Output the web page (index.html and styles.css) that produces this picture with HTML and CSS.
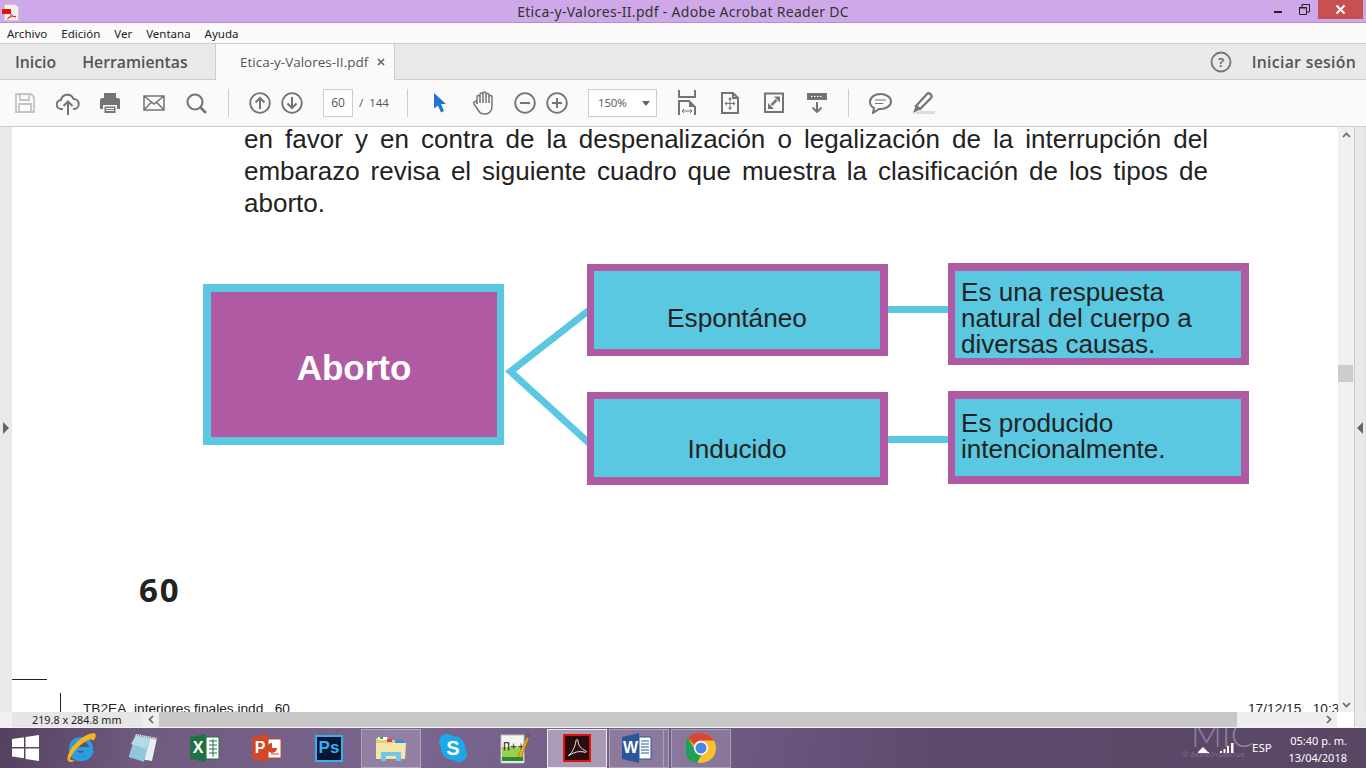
FILE: index.html
```html
<!DOCTYPE html>
<html lang="es">
<head>
<meta charset="utf-8">
<title>Etica-y-Valores-II.pdf - Adobe Acrobat Reader DC</title>
<link rel="stylesheet" href="styles.css">
</head>
<body>
<div class="app">

  <!-- window title -->
  <header class="titlebar">
    <svg class="app-icon" width="18" height="18" viewBox="0 0 18 18">
      <path d="M3.500 1.500h11l3 3v13h-14z" fill="#f4f0ee" stroke="#cfc8c8"/>
      <rect x="1" y="6" width="9" height="5" fill="#e5120c"/>
      <path d="M6 16c2-1 4-3 4.500-5M10 11c1 2 3 3 5 3M7 15c2-1 5-2 8-1.500" fill="none" stroke="#d8322c"/>
    </svg>
    <span class="title-text">Etica-y-Valores-II.pdf - Adobe Acrobat Reader DC</span>
    <div class="win-btns">
      <span class="win-min"></span>
      <svg class="win-restore" width="11" height="11" viewBox="0 0 11 11"><path d="M0.500 3.500h7v7h-7zM3 3V0.500h7.500V8H8" fill="none" stroke="#222" stroke-width="1"/><path d="M0 3h8v1.500H0z" fill="#222"/></svg>
      <span class="win-close">
        <svg width="11" height="11" viewBox="0 0 11 11"><path d="M1.500 1.500l8 8M9.500 1.500l-8 8" stroke="#fff" stroke-width="2"/></svg>
      </span>
    </div>
  </header>

  <nav class="menubar">
    <span>Archivo</span><span>Edición</span><span>Ver</span><span>Ventana</span><span>Ayuda</span>
  </nav>

  <div class="tabbar">
    <span class="tab-link tab-first">Inicio</span>
    <span class="tab-link">Herramientas</span>
    <div class="doc-tab">
      <span>Etica-y-Valores-II.pdf</span>
      <svg width="8" height="8" viewBox="0 0 8 8"><path d="M1 1l6 6M7 1L1 7" stroke="#666" stroke-width="1.700"/></svg>
    </div>
    <svg class="help-icon" width="22" height="22" viewBox="0 0 22 22">
      <circle cx="11" cy="11" r="9.500" fill="none" stroke="#747474" stroke-width="1.800"/>
      <text x="11" y="15.500" text-anchor="middle" class="help-mark">?</text>
    </svg>
    <span class="tab-link signin">Iniciar sesión</span>
  </div>

  <div class="toolbar">
    <svg class="tool t-save" width="20" height="20" viewBox="0 0 20 20"><path d="M1 1h15l3 3v15H1zM5 1v6h9V1M4 19v-8h12v8" fill="none" stroke="#c4c4c4" stroke-width="1.800"/></svg>
    <svg class="tool t-cloud" width="24" height="24" viewBox="0 0 24 24"><path d="M7 17H5.500a4.500 4.500 0 0 1-.5-9 6.500 6.500 0 0 1 12.500-1 5 5 0 0 1 .5 10H17" fill="none" stroke="#747474" stroke-width="2"/><path d="M12 23V10M7.500 14l4.500-4.500 4.500 4.500" fill="none" stroke="#747474" stroke-width="2"/></svg>
    <svg class="tool t-print" width="22" height="22" viewBox="0 0 22 22"><path d="M5 6V1h12v5zM3 6h16a2 2 0 0 1 2 2v9h-3v-4H4v4H1V8a2 2 0 0 1 2-2zM5.500 14.500h11V21h-11z" fill="#747474"/><path d="M7 16.500h8M7 18.500h8" stroke="#fff"/></svg>
    <svg class="tool t-mail" width="22" height="16" viewBox="0 0 22 16"><path d="M1 1h20v14H1zM1 1l10 8 10-8M1 15l7.500-8M21 15l-7.500-8" fill="none" stroke="#747474" stroke-width="1.500"/></svg>
    <svg class="tool t-search" width="21" height="21" viewBox="0 0 21 21"><circle cx="9" cy="9" r="7.500" fill="none" stroke="#747474" stroke-width="2"/><path d="M14.500 14.500l5.500 5.500" stroke="#747474" stroke-width="2.500"/></svg>
    <span class="sep sep-a"></span>
    <svg class="tool t-up" width="22" height="22" viewBox="0 0 22 22"><circle cx="11" cy="11" r="9.800" fill="none" stroke="#747474" stroke-width="1.800"/><path d="M11 17V6M6.500 10.500L11 6l4.500 4.500" fill="none" stroke="#747474" stroke-width="2"/></svg>
    <svg class="tool t-down" width="22" height="22" viewBox="0 0 22 22"><circle cx="11" cy="11" r="9.800" fill="none" stroke="#747474" stroke-width="1.800"/><path d="M11 5v11M6.500 11.500L11 16l4.500-4.500" fill="none" stroke="#747474" stroke-width="2"/></svg>
    <span class="page-input">60</span>
    <span class="page-total">/&nbsp; 144</span>
    <span class="sep sep-b"></span>
    <svg class="tool t-arrow" width="14" height="21" viewBox="0 0 14 21"><path d="M1 1l12 11H8l3 7-3 1.500-3-7-4 3z" fill="#1f74cf"/></svg>
    <svg class="tool t-hand" width="24" height="24" viewBox="0 0 24 24"><path d="M6 13V6a1.500 1.500 0 0 1 3 0V3.500a1.500 1.500 0 0 1 3 0v-1a1.500 1.500 0 0 1 3 0V4a1.500 1.500 0 0 1 3 0v2a1.500 1.500 0 0 1 3 0v9c0 5-3 8-7 8s-5-1-7-4l-4-6a1.500 1.500 0 0 1 2.500-2zM9 6v6M12 3v9M15 3v9M18 5v7" fill="none" stroke="#747474" stroke-width="1.500"/></svg>
    <svg class="tool t-minus" width="22" height="22" viewBox="0 0 22 22"><circle cx="11" cy="11" r="9.800" fill="none" stroke="#747474" stroke-width="1.800"/><path d="M6 11h10" stroke="#747474" stroke-width="2"/></svg>
    <svg class="tool t-plus" width="22" height="22" viewBox="0 0 22 22"><circle cx="11" cy="11" r="9.800" fill="none" stroke="#747474" stroke-width="1.800"/><path d="M6 11h10M11 6v10" stroke="#747474" stroke-width="2"/></svg>
    <div class="zoom-box"><span>150%</span><i class="caret"></i></div>
    <svg class="tool t-fitw" width="18" height="25" viewBox="0 0 18 25"><path d="M1 0v7h16V0" fill="none" stroke="#747474" stroke-width="2"/><path d="M1 25V11h10l6 6v8" fill="none" stroke="#747474" stroke-width="2"/><path d="M11 11v6h6z" fill="#747474"/><path d="M4 21h10M6 19l-2 2 2 2M12 19l2 2-2 2" fill="none" stroke="#747474"/></svg>
    <svg class="tool t-fitp" width="18" height="22" viewBox="0 0 18 22"><path d="M1 1h11l5 5v15H1zM12 1v5h5" fill="none" stroke="#747474" stroke-width="2"/><path d="M9 7v9M5 11.500h8" stroke="#747474"/><path d="M9 5l2 2.500H7zM9 18l2-2.500H7zM3.500 11.500L6 9.500v4zM14.500 11.500L12 9.500v4z" fill="#747474"/></svg>
    <svg class="tool t-full" width="20" height="21" viewBox="0 0 20 21"><path d="M1 1.500h18v18.500H1z" fill="none" stroke="#747474" stroke-width="2"/><path d="M10 4.500h6v6zM10 17H4v-6z" fill="#747474"/><path d="M12.500 8l-5 5" stroke="#747474" stroke-width="2.500"/></svg>
    <svg class="tool t-read" width="22" height="21" viewBox="0 0 22 21"><path d="M1 1h20v7H1z" fill="#747474"/><path d="M5 4.500h1.500M8 4.500h1.500M11 4.500h1.500M14 4.500h1.500" stroke="#fff"/><path d="M11 10v10M6.500 15.500L11 20l4.500-4.500" fill="none" stroke="#747474" stroke-width="2"/></svg>
    <span class="sep sep-c"></span>
    <svg class="tool t-note" width="23" height="21" viewBox="0 0 23 21"><path d="M11.500 1C6 1 1 4 1 9c0 3 2 5 4 6l-1 5 6-4h1.500C17 16 22 13 22 8.500S17 1 11.500 1z" fill="none" stroke="#747474" stroke-width="2"/><path d="M6 7h11M6 10.500h8" stroke="#747474"/></svg>
    <svg class="tool t-mark" width="23" height="22" viewBox="0 0 23 22"><path d="M7 19h16v3H1z" fill="#dcdcdc"/><path d="M4 14L15 2c2-2 6 1 4 4L8 17z" fill="none" stroke="#747474" stroke-width="2.200"/><path d="M4 13l5 4-8 4z" fill="#747474"/></svg>
  </div>

  <div class="viewer">
    <div class="pane-left"><i class="arrow-right"></i></div>

    <main class="page">
      <div class="reading">
        <p class="line">en favor y en contra de la despenalización o legalización de la interrupción del</p>
        <p class="line">embarazo revisa el siguiente cuadro que muestra la clasificación de los tipos de</p>
        <p class="line last">aborto.</p>
      </div>

      <!-- diagram -->
      <svg class="links" width="1340" height="585">
        <path d="M590 182.500L510.500 244.500L590 317" fill="none" stroke="#5bc8e2" stroke-width="7"/>
        <path d="M888 182.500h60M888 312.500h61" fill="none" stroke="#5bc8e2" stroke-width="7"/>
      </svg>
      <div class="node root">Aborto</div>
      <div class="node kind kind-a">Espontáneo</div>
      <div class="node kind kind-b">Inducido</div>
      <div class="node note note-a">Es una respuesta<br>natural del cuerpo a<br>diversas causas.</div>
      <div class="node note note-b">Es producido<br>intencionalmente.</div>

      <div class="folio">60</div>
      <span class="crop-h"></span>
      <span class="crop-v"></span>
      <span class="slug">TB2EA_interiores finales.indd&nbsp;&nbsp; 60</span>
      <span class="slug slug-date">17/12/15&nbsp;&nbsp; 10:3</span>
    </main>

    <div class="vscroll">
      <span class="vbtn"><svg width="9" height="6" viewBox="0 0 9 6"><path d="M1 5l3.500-3.500L8 5" fill="none" stroke="#666" stroke-width="1.700"/></svg></span>
      <span class="vthumb"></span>
      <span class="vbtn"><svg width="9" height="6" viewBox="0 0 9 6"><path d="M1 1l3.500 3.500L8 1" fill="none" stroke="#666" stroke-width="1.700"/></svg></span>
    </div>
    <div class="pane-right"><i class="arrow-left"></i></div>
  </div>

  <div class="statusbar">
    <span class="page-size">219.8 x 284.8 mm</span>
    <span class="hbtn"><svg width="6" height="9" viewBox="0 0 6 9"><path d="M5 1L1.500 4.500 5 8" fill="none" stroke="#666" stroke-width="1.700"/></svg></span>
    <span class="htrack"></span>
    <span class="hrest"><svg width="6" height="9" viewBox="0 0 6 9"><path d="M1 1l3.500 3.500L1 8" fill="none" stroke="#666" stroke-width="1.700"/></svg></span>
    <span class="hcorner"></span>
    <span class="hpane"></span>
  </div>

  <!-- windows taskbar -->
  <footer class="taskbar">
    <svg class="start" width="27" height="26" viewBox="0 0 27 26"><path d="M0 4l12-1.700V12H0zM13.500 2L27 0v12H13.500zM0 13.500h12v9.700L0 21.500zM13.500 13.500H27V26l-13.500-2z" fill="#fff"/></svg>
    <span class="task"><svg width="32" height="32" viewBox="0 0 32 32"><path d="M8 17h18c0-6-4-10-10-10S6 11 6 17s4 10 10 10c4 0 8-2 10-6h-6c-2 3-9 2-10-2" fill="none" stroke="#2a9fe0" stroke-width="4"/><path d="M3 29C0 22 13 3 29 1c3 1 2 5-1 8C27 4 11 13 5 27c1 1 3 2 6 1-3 2-6 3-8 1z" fill="#f4b51e"/></svg></span>
    <span class="task"><svg width="32" height="32" viewBox="0 0 32 32"><path d="M9 2L30 6l-5 23L2 25z" fill="#e9eef0"/><path d="M9 3l14 4-6 23L2 25z" fill="#8fc6da"/><path d="M9 3l14 4-4 10L4 12z" fill="#b4dce8"/><path d="M10 3l20 4" stroke="#8a8a8a" stroke-width="2" stroke-dasharray="1 1"/></svg></span>
    <span class="task"><svg width="30" height="28" viewBox="0 0 30 28"><path d="M0 3l16-3v28L0 25z" fill="#1f7244"/><path d="M16 3h13v22H16z" fill="#fff" stroke="#1f7244"/><path d="M19 7h8M19 11h8M19 15h8M19 19h8M23 5v18" stroke="#1f7244"/><text x="8" y="19" text-anchor="middle" class="app-letter">X</text></svg></span>
    <span class="task"><svg width="30" height="28" viewBox="0 0 30 28"><path d="M0 3l16-3v28L0 25z" fill="#d24726"/><path d="M16 5h13v19H16z" fill="#fff" stroke="#d24726"/><path d="M20 9a5 5 0 1 0 5 5h-5z" fill="#d24726"/><path d="M19 20h8" stroke="#d24726"/><text x="8" y="19" text-anchor="middle" class="app-letter">P</text></svg></span>
    <span class="task"><span class="ps-icon">Ps</span></span>
    <span class="task open">
      <svg width="32" height="28" viewBox="0 0 32 28"><path d="M1 4h12l2 2h14v17H1z" fill="#e4cf7e"/><path d="M3 3h9v3H3z" fill="#fff"/><path d="M5 3h3v2H5z" fill="#3aa83a"/><path d="M12 5h5v3h-5z" fill="#e34"/><path d="M20 6h9v3h-9z" fill="#3a8ee0"/><path d="M1 9h30l-1 16H1z" fill="#f3e6a6"/><path d="M6 27V18h20v9h-5v-5H11v5z" fill="#6ec6e8"/></svg>
    </span>
    <span class="task"><svg width="30" height="30" viewBox="0 0 30 30"><circle cx="9" cy="9" r="8" fill="#1ba9e8"/><circle cx="21" cy="21" r="8" fill="#1ba9e8"/><circle cx="15" cy="15" r="12" fill="#1ba9e8"/><text x="15" y="22" text-anchor="middle" class="skype-s">S</text></svg></span>
    <span class="task"><svg width="30" height="32" viewBox="0 0 30 32"><path d="M1 3h23v28H1z" fill="#f4f4ee" stroke="#bbb"/><path d="M2 15h21v14H2z" fill="#9ad050"/><path d="M2 25h21v4H2z" fill="#2a8a2a"/><text x="3" y="17" class="npp-mark">∏++</text><path d="M18 24L27 5l2 1-8 20z" fill="#e8b020" stroke="#7a5a10" stroke-width=".5"/><path d="M27 5l1-3 2 1-1 3z" fill="#a04040"/></svg></span>
    <span class="task open current"><svg width="28" height="28" viewBox="0 0 28 28"><rect x="1" y="1" width="26" height="26" fill="#2a0c0c" stroke="#e3120b" stroke-width="2"/><path d="M6 21c3-2 6-8 7-14 0-2 2-2 2 0 0 4 3 8 8 10 1 1 0 2-2 1-5-1-10 0-14 3-1 1-2 1-1 0z" fill="none" stroke="#eee"/></svg></span>
    <span class="task open stacked"><svg width="30" height="30" viewBox="0 0 30 30"><path d="M0 4l17-4v30L0 26z" fill="#2b579a"/><path d="M17 4h12v22H17z" fill="#fff" stroke="#2b579a"/><path d="M19 8h8M19 11h8M19 14h8M19 17h8M19 20h8" stroke="#2b579a"/><text x="8.500" y="20" text-anchor="middle" class="app-letter">W</text></svg></span>
    <span class="task open"><svg width="30" height="30" viewBox="0 0 30 30"><circle cx="15" cy="15" r="15" fill="#fbc02d"/><path d="M15 0a15 15 0 0 1 13 7.500H15a7.500 7.500 0 0 0-7 4.500L2 5A15 15 0 0 1 15 0z" fill="#dd4437"/><path d="M2 5l6.500 11a7.500 7.500 0 0 0 6.500 6.500L11 30A15 15 0 0 1 2 5z" fill="#1da15a"/><circle cx="15" cy="15" r="7" fill="#fff"/><circle cx="15" cy="15" r="5.500" fill="#4a85ee"/></svg></span>

    <div class="tray">
      <span class="watermark">MIC</span>
      <span class="watermark-sub">© bethel/ruta/rue</span>
      <svg class="tray-icons" width="40" height="11" viewBox="0 0 40 11"><path d="M0 9l5-5 5 5z" fill="#fff"/><path d="M0 9.500h11" stroke="#fff"/><path d="M22 8h2v2h-2zM25.500 6h2v4h-2zM29 3h2v7h-2zM33 0h2.500v10H33z" fill="#fff"/></svg>
      <span class="lang">ESP</span>
      <span class="clock">05:40 p. m.<br>13/04/2018</span>
    </div>
  </footer>
</div>
</body>
</html>
```

FILE: styles.css
```css
* { box-sizing: border-box; }
html, body {
  margin: 0;
  height: 100%;
  overflow: hidden;
}
body {
  font-family: "Open Sans", "Liberation Sans", sans-serif;
  color: #444;
  background: #fff;
}
.app {
  width: 1366px;
  height: 768px;
  display: flex;
  flex-direction: column;
}

/* title bar */
.titlebar {
  height: 23px;
  background: #cfa8e9;
  border-bottom: 1px solid #b48fd0;
  display: flex;
  align-items: center;
  position: relative;
}
.app-icon { margin-left: 1px; margin-top: 2px; }
.title-text {
  position: absolute;
  left: 0;
  right: 0;
  text-align: center;
  font-family: "Noto Sans", sans-serif;
  font-size: 14px;
  letter-spacing: 0.300px;
  color: #333;
}
.win-btns {
  margin-left: auto;
  display: flex;
  align-items: flex-start;
  height: 22px;
  position: relative;
  z-index: 1;
}
.win-min {
  width: 8px;
  height: 2px;
  background: #222;
  margin-top: 11px;
  margin-right: 17px;
}
.win-restore { margin-top: 4px; margin-right: 8px; }
.win-close {
  width: 45px;
  height: 19px;
  margin-right: 3px;
  background: #c75050;
  display: flex;
  align-items: center;
  justify-content: center;
}

.menubar {
  height: 20px;
  background: #fafafa;
  display: flex;
  align-items: center;
  gap: 14px;
  padding-left: 7px;
  font-family: "Noto Sans", sans-serif;
  font-size: 11.500px;
  color: #222;
}

/* tabs */
.tabbar {
  height: 37px;
  background: #e9e9e9;
  border-top: 1px solid #ccc;
  border-bottom: 1px solid #ccc;
  display: flex;
  align-items: center;
  position: relative;
}
.tab-link {
  font-size: 15.800px;
  font-weight: 600;
  color: #555;
}
.tab-first { margin-left: 15px; margin-right: 26px; }
.doc-tab {
  position: absolute;
  left: 215px;
  top: -1px;
  width: 180px;
  height: 37px;
  background: #fafafa;
  border-top: 1px solid #ccc;
  border-left: 1px solid #ccc;
  border-right: 1px solid #ccc;
  display: flex;
  align-items: center;
  padding-left: 24px;
  gap: 9px;
  font-size: 13.500px;
  color: #555;
}
.help-icon { margin-left: auto; margin-right: 20px; }
.help-mark {
  font-family: "Open Sans", sans-serif;
  font-size: 13px;
  font-weight: 700;
  fill: #747474;
}
.signin { margin-right: 10px; letter-spacing: 0.300px; }

/* toolbar */
.toolbar {
  height: 47px;
  background: #fafafa;
  border-bottom: 1px solid #ccc;
  position: relative;
}
.tool { position: absolute; }
.t-save { left: 15px; top: 13px; }
.t-cloud { left: 56px; top: 12px; }
.t-print { left: 99px; top: 12px; }
.t-mail { left: 143px; top: 15px; }
.t-search { left: 186px; top: 13px; }
.t-up { left: 249px; top: 12px; }
.t-down { left: 281px; top: 12px; }
.t-arrow { left: 433px; top: 12px; }
.t-hand { left: 471px; top: 11px; }
.t-minus { left: 514px; top: 12px; }
.t-plus { left: 546px; top: 12px; }
.t-fitw { left: 678px; top: 10px; }
.t-fitp { left: 721px; top: 12px; }
.t-full { left: 764px; top: 12px; }
.t-read { left: 806px; top: 12px; }
.t-note { left: 869px; top: 13px; }
.t-mark { left: 912px; top: 12px; }
.sep {
  position: absolute;
  top: 9px;
  width: 1px;
  height: 28px;
  background: #ccc;
}
.sep-a { left: 228px; }
.sep-b { left: 407px; }
.sep-c { left: 848px; }
.page-input {
  position: absolute;
  left: 323px;
  top: 9px;
  width: 30px;
  height: 28px;
  border: 1px solid #ccc;
  background: #fff;
  font-size: 12px;
  line-height: 26px;
  text-align: center;
  color: #555;
}
.page-total {
  position: absolute;
  left: 359px;
  top: 9px;
  font-size: 11.500px;
  line-height: 28px;
  color: #555;
}
.zoom-box {
  position: absolute;
  left: 588px;
  top: 9px;
  width: 69px;
  height: 28px;
  border: 1px solid #ccc;
  background: #fff;
  font-size: 11.500px;
  line-height: 26px;
  padding-left: 9px;
  letter-spacing: -0.200px;
  color: #555;
}
.caret {
  position: absolute;
  right: 6px;
  top: 11px;
  border-left: 4px solid transparent;
  border-right: 4px solid transparent;
  border-top: 5px solid #666;
}

/* document area */
.viewer {
  height: 585px;
  display: flex;
}
.pane-left {
  width: 12px;
  background: #e9e9e9;
  position: relative;
}
.pane-right {
  width: 12px;
  background: #e9e9e9;
  border-left: 1px solid #ccc;
  border-right: 1px solid #ddd;
  position: relative;
}
.arrow-right {
  position: absolute;
  left: 3px;
  top: 295px;
  border-top: 6px solid transparent;
  border-bottom: 6px solid transparent;
  border-left: 6px solid #666;
}
.arrow-left {
  position: absolute;
  left: 2px;
  top: 295px;
  border-top: 6px solid transparent;
  border-bottom: 6px solid transparent;
  border-right: 6px solid #666;
}
.page {
  width: 1326px;
  background: #fff;
  position: relative;
  overflow: hidden;
  font-family: "Liberation Sans", Arial, sans-serif;
  color: #222;
}
.reading {
  position: absolute;
  left: 232px;
  top: -4px;
  width: 964px;
  font-size: 26px;
  line-height: 32px;
}
.line {
  margin: 0;
  text-align: justify;
  text-align-last: justify;
}
.line.last { text-align-last: left; }

.links { position: absolute; left: -12px; top: 0; }
.node { position: absolute; }
.root {
  left: 191px;
  top: 157px;
  width: 301px;
  height: 161px;
  background: #af5aa3;
  border: 8px solid #5bc8e2;
  border-right-width: 7px;
  color: #fff;
  font-size: 35px;
  font-weight: 700;
  text-align: center;
  line-height: 151px;
}
.kind {
  left: 575px;
  width: 301px;
  background: #5bc8e2;
  border: 7px solid #af5aa3;
  border-right-width: 8px;
  font-size: 26.200px;
  text-align: center;
}
.kind-a { top: 137px; height: 92px; line-height: 95px; }
.kind-b { top: 265px; height: 93px; border-bottom-width: 8px; line-height: 100px; }
.note {
  left: 936px;
  width: 301px;
  background: #5bc8e2;
  border: 8px solid #af5aa3;
  border-left-width: 7px;
  font-size: 26.100px;
  line-height: 26px;
  padding-left: 6px;
}
.note-a { top: 136px; height: 102px; border-bottom-width: 7px; padding-top: 8px; }
.note-b { top: 264px; height: 93px; padding-top: 11px; }

.folio {
  position: absolute;
  left: 127px;
  top: 440px;
  font-family: "Open Sans", sans-serif;
  font-size: 33px;
  font-weight: 700;
  letter-spacing: 2px;
}
.crop-h {
  position: absolute;
  left: 0;
  top: 552px;
  width: 35px;
  height: 1px;
  background: #222;
}
.crop-v {
  position: absolute;
  left: 48px;
  top: 566px;
  width: 1px;
  height: 20px;
  background: #222;
}
.slug {
  position: absolute;
  left: 71px;
  top: 574px;
  font-size: 13.700px;
  white-space: nowrap;
}
.slug-date { left: 1236px; }

.vscroll {
  width: 16px;
  background: #f0f0f0;
  position: relative;
  display: flex;
  flex-direction: column;
  justify-content: space-between;
}
.vbtn {
  height: 15px;
  display: flex;
  align-items: center;
  justify-content: center;
}
.vthumb {
  position: absolute;
  left: 0;
  top: 238px;
  width: 15px;
  height: 17px;
  background: #ccc;
}

.statusbar {
  height: 15px;
  display: flex;
  font-size: 10.800px;
  background: #f0f0f0;
  color: #222;
}
.page-size {
  width: 130px;
  margin-left: 12px;
  padding-left: 20px;
  background: #e6e6e6;
  font-family: "Noto Sans", sans-serif;
  line-height: 15px;
  white-space: nowrap;
}
.hbtn {
  width: 17px;
  background: #eee;
  display: flex;
  align-items: center;
  justify-content: center;
}
.htrack {
  width: 1078px;
  background: #c8c8c8;
}
.hrest {
  width: 100px;
  background: #eee;
  display: flex;
  align-items: center;
  justify-content: flex-end;
  padding-right: 5px;
}
.hcorner {
  width: 17px;
  background: #fff;
}
.hpane {
  width: 12px;
  background: #e9e9e9;
  border-left: 1px solid #ccc;
}

/* taskbar */
.taskbar {
  height: 41px;
  border-top: 1px solid #f4f2f5;
  background: linear-gradient(100deg, #54405f 0%, #6f5a80 10%, #7a658e 30%, #6f5a84 52%, #5e4a6e 68%, #594663 100%);
  display: flex;
  align-items: center;
  gap: 2px;
  position: relative;
}
.start { margin-left: 12px; margin-right: 10px; }
.task {
  width: 60px;
  height: 39px;
  display: flex;
  align-items: center;
  justify-content: center;
  flex: none;
  position: relative;
}
.task.open {
  background: rgba(255, 255, 255, 0.180);
  border: 1px solid rgba(255, 255, 255, 0.300);
}
.task.current {
  background: rgba(255, 255, 255, 0.380);
  border: 1px solid rgba(255, 255, 255, 0.800);
}
.task.stacked { padding-right: 5px; }
.task.stacked::after {
  content: "";
  position: absolute;
  right: 4px;
  top: 0;
  bottom: 0;
  width: 1px;
  background: rgba(255, 255, 255, 0.300);
}
.app-letter {
  font-family: "Liberation Sans", sans-serif;
  font-size: 16px;
  font-weight: 700;
  fill: #fff;
}
.skype-s {
  font-family: "Liberation Sans", sans-serif;
  font-size: 20px;
  font-weight: 700;
  fill: #fff;
}
.npp-mark {
  font-family: "DejaVu Sans", sans-serif;
  font-size: 9px;
  fill: #222;
}
.ps-icon {
  width: 28px;
  height: 27px;
  background: #0b1430;
  border: 2px solid #2fb4f0;
  color: #2fb4f0;
  font-family: "Liberation Sans", sans-serif;
  font-size: 17px;
  font-weight: 700;
  line-height: 22px;
  text-align: center;
}
.tray {
  position: absolute;
  right: 0;
  top: 0;
  width: 240px;
  height: 40px;
  color: #fff;
  overflow: hidden;
}
.watermark {
  position: absolute;
  left: 65px;
  top: -14px;
  font-family: "Lato", sans-serif;
  font-weight: 300;
  font-size: 34px;
  line-height: 40px;
  color: #8f7f9a;
}
.watermark-sub {
  position: absolute;
  left: 56px;
  top: 20px;
  font-size: 8px;
  font-style: italic;
  color: #7f6f8c;
  white-space: nowrap;
}
.tray-icons { position: absolute; left: 72px; top: 15px; }
.lang {
  position: absolute;
  left: 126px;
  top: 12px;
  font-family: "Noto Sans", sans-serif;
  font-size: 11.500px;
}
.clock {
  position: absolute;
  right: 19px;
  top: 4px;
  text-align: right;
  font-family: "Noto Sans", sans-serif;
  font-size: 11px;
  line-height: 17px;
}
```
